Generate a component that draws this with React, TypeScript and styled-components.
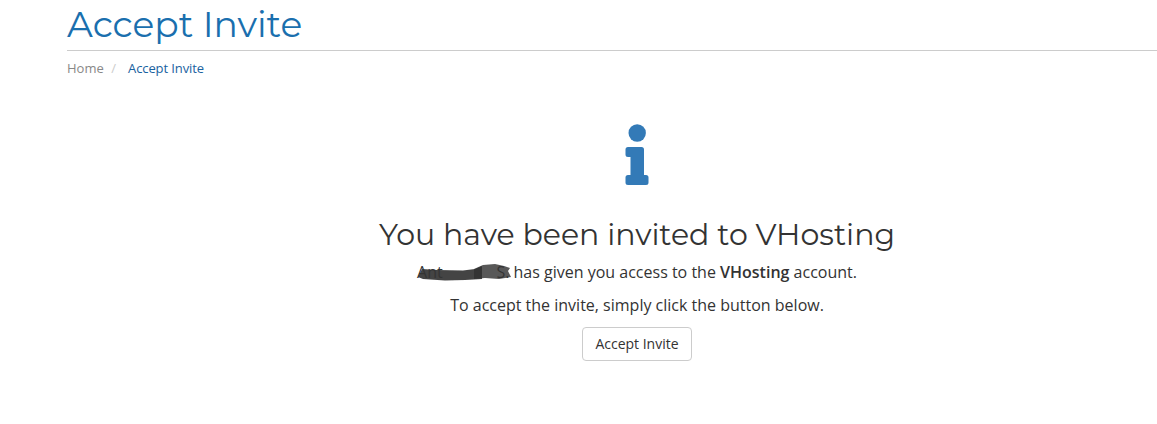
import React from 'react';
import styled, { createGlobalStyle } from 'styled-components';

const Global = createGlobalStyle`
  * { box-sizing: border-box; }
  body {
    margin: 0;
    background: #fff;
    color: #333;
    font: 16px/23px "Open Sans", sans-serif;
    overflow: hidden;
  }
`;
const Page = styled.div`
  height: 424px;
  padding-left: 67px;
`;
const Title = styled.h1`
  margin: 0;
  height: 51px;
  border-bottom: 1px solid #ccc;
  color: #1a6fae;
  font: 400 36px/49px Montserrat, "Open Sans", sans-serif;
`;
const Crumbs = styled.nav`
  display: flex;
  padding-top: 7px;
  color: #888;
  font-size: 13px;
  line-height: 20px;
`;
const Slash = styled.span`
  padding: 0 12px 0 7.5px;
  color: #ccc;
`;
const Current = styled.span`
  color: #1a62a0;
  letter-spacing: -0.1px;
`;
const Content = styled.main`
  display: flex;
  flex-direction: column;
  align-items: center;
  width: 1140px;
  padding-top: 46px;
`;
const Icon = styled.svg`
  width: 24px;
  height: 62px;
  fill: #337ab7;
`;
const Heading = styled.h2`
  margin: 29px 0 6px;
  font: 400 30px/40px Montserrat, "Open Sans", sans-serif;
  white-space: nowrap;
`;
const Line = styled.p`
  display: flex;
  margin: 0 0 10px;
  white-space: pre;
`;
const Strong = styled.strong`
  font-weight: 600;
`;
const Redacted = styled.span`
  position: relative;
  display: flex;
  justify-content: space-between;
  width: 96.5px;
  padding-right: 4px;
`;
const Scribble = styled.svg`
  position: absolute;
  left: 0;
  top: 0;
  width: 100px;
  height: 24px;
  overflow: visible;
`;
const Button = styled.button`
  width: 110px;
  height: 34px;
  padding: 0;
  border: 1px solid #ccc;
  border-radius: 4px;
  background: #fff;
  color: #333;
  font: 14px/20px "Open Sans", sans-serif;
`;

export default function App() {
  return (
    <Page>
      <Global />
      <Title>Accept Invite</Title>
      <Crumbs>Home<Slash>/</Slash><Current>Accept Invite</Current></Crumbs>
      <Content>
        <Icon viewBox="0 0 24 62">
          <circle cx="12.2" cy="9" r="8.7" />
          <path d="M3 23h13.500q2.500 0 2.500 2.500V51h2q2.500 0 2.500 2.500v5q0 2.500-2.500 2.500H3q-2.500 0-2.500-2.500v-5Q.5 51 3 51h2.500V33H3Q.5 33 .5 30.500v-5Q.5 23 3 23z" />
        </Icon>
        <Heading>You have been invited to VHosting</Heading>
        <Line>
          <Redacted>
            <span>Ant</span>
            <span>S.</span>
            <Scribble viewBox="0 0 100 24" aria-hidden="true">
              <defs>
                <filter id="soft" x="-10%" y="-50%" width="120%" height="200%">
                  <feGaussianBlur stdDeviation="0.7" />
                </filter>
              </defs>
              <g fill="#333" filter="url(#soft)">
                <path d="M5 8l15 1 26 .5 12-1.500 7-3 0 13-17 1-20 .5-22-1.500-5-2z" opacity=".92" />
                <path d="M57 8l9-4 12-1 9 2 6 2-2 3 3 6-12 2-14-1-11 1z" opacity=".82" />
              </g>
            </Scribble>
          </Redacted>
          <span>has given you access to the <Strong>VHosting</Strong> account.</span>
        </Line>
        <Line>To accept the invite, simply click the button below.</Line>
        <Button>Accept Invite</Button>
      </Content>
    </Page>
  );
}
